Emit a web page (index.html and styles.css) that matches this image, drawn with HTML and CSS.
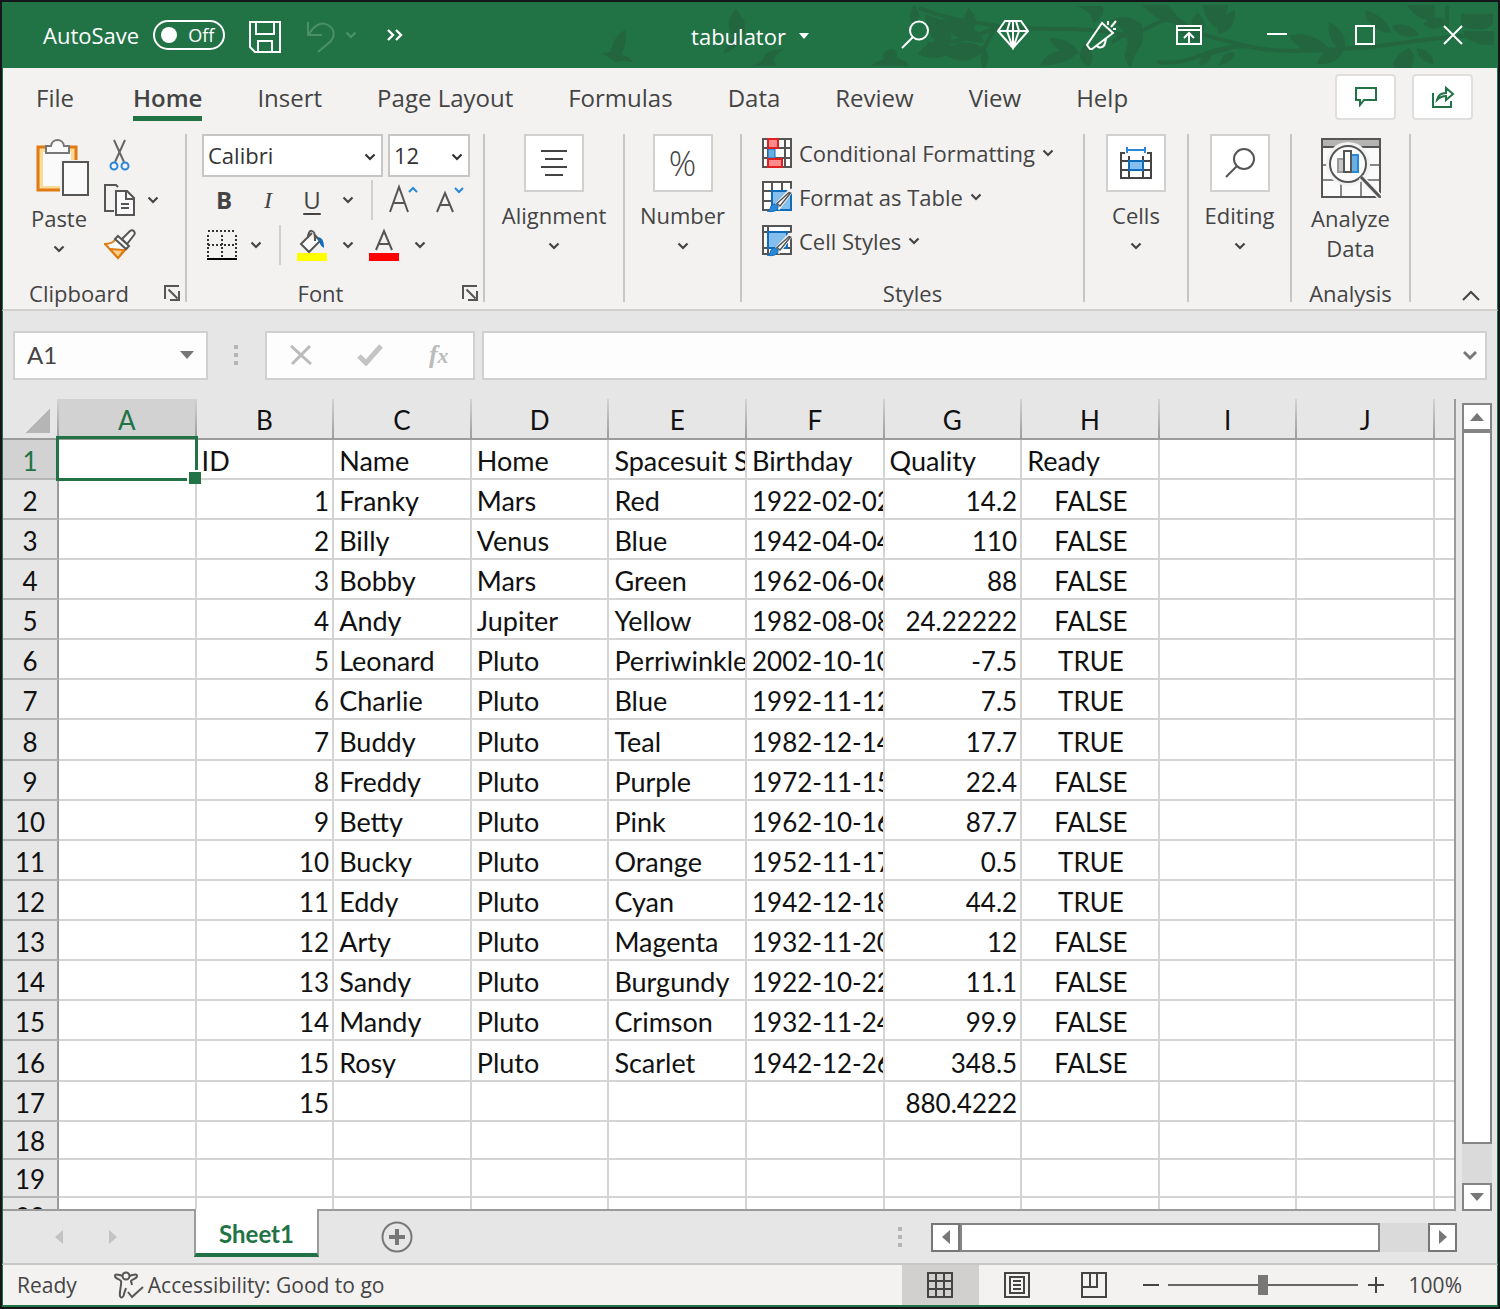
FILE: index.html
```html
<!DOCTYPE html>
<html lang="en">
<head>
<meta charset="utf-8">
<title>tabulator</title>
<link rel="stylesheet" href="styles.css">
</head>
<body>
<svg class="defs" aria-hidden="true">
  <symbol id="chev" viewBox="0 0 12 8"><path d="M1.500 1.500 6 6l4.500-4.500" fill="none" stroke="currentColor" stroke-width="2.200"/></symbol>
  <symbol id="launch" viewBox="0 0 18 18"><path d="M2 15V2h14M5.500 5.500l9 9M16 7v9H7" fill="none" stroke="#555" stroke-width="2"/></symbol>
  <symbol id="brush" viewBox="0 0 30 30"><path d="M29 9 17 25l-3-3L27 8l3-1z" fill="#fff" stroke="#f3f2f1" stroke-width="3"/><path d="M28.500 10 18 23l-3-2.500L27 9.500z" fill="#fff" stroke="#555" stroke-width="1.500"/><path d="M5 28c3 0 3-2 4-5 2-3 6-2 7 0 1 4-5 7-11 5z" fill="#2b88d8" stroke="#0f6cbd"/></symbol>
</svg>
<div class="window">
  <header class="titlebar">
    <svg class="leaves" viewBox="0 0 900 66" aria-hidden="true">
      <g fill="#22653f">
        <path d="M28 28c-10 6-13 14-14 22l-9 1c5 3 10 8 16 9 5-2 10 0 15 0-3-5-8-6-12-8 5-8 5-15 4-24z"/>
        <path d="M139 7c-9 8-8 20-4 27l-9 18c16-5 25-20 21-34zM152 64c8-1 14-4 15-9 3-6 10-7 19-8-2 4-9 6-9 10s3 5 1 7zM275 64c3-5 10-5 12-7-3-6 3-10 8-10 6 1 6 7 4 9 5 1 10 2 12 8z"/>
        <path d="M317 3c7 10 7 13 0 20-5-6-5-13 0-20zM328 13c20 2 34 18 22 34-16-6-20-20-22-34zM341 18c20-4 42 8 46 22-20 2-36-8-46-22zM371 6c10 8 10 16 4 24-10-8-9-14-4-24zM321 52c9-14 25-15 37-6-10 12-25 12-37 6zM346 51c10-12 26-14 42-4-10 14-28 15-42 4zM387 45c6 8 6 14 0 22-5-8-4-14 0-22z"/>
        <path d="M480 4h26c1 9-3 15-10 17-1-9-7-14-16-17zM443 64c6-15 22-18 37-14-6 10-18 12-37 14zM452 36c16 0 27 7 30 16-14 2-24-4-30-16zM488 42c9 9 9 16 4 22-10-3-12-14-4-22zM513 19c20-10 35 1 33 17-1 12-10 14-12 30-9-9-6-15-3-25-4-14-9-18-18-22z"/>
        <path d="M545 3h25c10 8 11 14 13 19-16 0-28-8-38-19zM605 3h26c-1 9-4 18-11 23-10-5-12-15-15-23zM638 8c1 14-5 22-17 24-2-13 7-20 17-24zM602 35c-10-12-9-18-1-24 9 9 9 17 1 24zM580 26c12 0 20 6 24 13-12 2-19-5-24-13zM602 63c2-10 6-14 12-12 1 8-5 12-12 12zM622 63c4-12 10-14 16-12-2 7-8 11-16 12z"/>
        <path d="M692 34c12-5 34 1 42 16-20 2-34-2-42-16zM732 20c15 8 18 17 15 29-12-4-17-17-15-29zM720 62c4-14 16-18 26-13-4 10-14 14-26 13zM768 8c14 4 24 12 26 23-16-1-25-10-26-23zM795 24c12-4 22 0 27 9-13 4-22 0-27-9zM812 46c8 7 4 14 2 21-8 0-15 0-18-3 2-9 8-14 16-18zM820 46c12 2 17 9 16 16-10-2-16-8-16-16zM810 3h27c2 7 0 12-3 15-12 0-20-8-24-15zM864 12h32v10c-8 8-20 6-32 2zM826 22c8-8 16-8 24-2-7 8-16 9-24 2zM866 29h31v14c-12 0-26-1-31-14z"/>
      </g>
      <g fill="none" stroke="#22653f" stroke-width="4">
        <path d="M322 6c25 10 40 12 80 18s80-2 130 10M330 42c30 0 45-8 70-16M385 50l15-28M543 30c20-10 35-24 52 0M560 10c40 25 60 26 90 34s70 4 110 2 70-12 137-14M650 44c-50 2-50 20-90 16M640 44l-36 10M850 4v26M515 40l30-18"/>
      </g>
    </svg>
    <div class="quick">
      <label class="autosave">AutoSave <span class="pill"><input type="checkbox">Off</span></label>
      <button class="tb save" aria-label="Save"><svg width="32" height="32" viewBox="0 0 32 32" fill="none" stroke="#fff" stroke-width="2"><path d="M1 1h30v30H6l-5-5zM7 1v12h18V1M9 31V20h14v11"/></svg></button>
      <button class="tb undo" aria-label="Undo"><svg width="28" height="32" viewBox="0 0 28 32" fill="none" stroke="#4c9069" stroke-width="2"><path d="M1 1v13h14M2 13C7 5 14 0 21 4s7 11 3 16L11 31"/></svg></button>
      <button class="tb more-undo" aria-label="Undo history"><svg class="chev"><use href="#chev"/></svg></button>
      <button class="tb" aria-label="More commands"><svg width="16" height="12" viewBox="0 0 16 12" fill="none" stroke="#fff" stroke-width="2.400"><path d="m1 1 5 5-5 5M9 1l5 5-5 5"/></svg></button>
    </div>
    <button class="doc">tabulator <svg width="10" height="6" viewBox="0 0 10 6"><path d="M0 0h10L5 6z" fill="#fff"/></svg></button>
    <div class="controls">
      <button class="tb search" aria-label="Search"><svg width="28" height="30" viewBox="0 0 28 30" fill="none" stroke="#fff" stroke-width="2"><circle cx="18" cy="10.500" r="9"/><path d="M12 17 1 28"/></svg></button>
      <button class="tb" aria-label="Premium"><svg width="32" height="30" viewBox="0 0 32 30" fill="none" stroke="#fff" stroke-width="2"><path d="M8 1h16l7 10-15 17L1 11zM1 11h30M13 1l-3 10 6 17 6-17-3-10M16 1v27"/></svg></button>
      <button class="tb" aria-label="Coming soon"><svg width="32" height="32" viewBox="0 0 32 32" fill="none" stroke="#fff" stroke-width="2"><path d="m17 4 11 10L7 30H5l-3-4zM12 26c1 4 7 3 8-2l1-4M23 6V2M26 8l5-6M28 10h3"/></svg></button>
      <button class="tb" aria-label="Ribbon display options"><svg width="26" height="20" viewBox="0 0 26 20" fill="none" stroke="#fff" stroke-width="2"><path d="M1 1h24v18H1zM1 5h24M13 18V9M8 13l5-5 5 5"/></svg></button>
      <button class="tb" aria-label="Minimize"><svg width="20" height="20" viewBox="0 0 20 20"><path d="M0 9h20" stroke="#fff" stroke-width="2"/></svg></button>
      <button class="tb" aria-label="Maximize"><svg width="20" height="20" viewBox="0 0 20 20"><path d="M1 1h18v18H1z" fill="none" stroke="#fff" stroke-width="2"/></svg></button>
      <button class="tb" aria-label="Close"><svg width="20" height="20" viewBox="0 0 20 20"><path d="m1 1 18 18M19 1 1 19" stroke="#fff" stroke-width="2"/></svg></button>
    </div>
  </header>

  <nav class="tabs">
    <button class="tab">File</button>
    <button class="tab active">Home</button>
    <button class="tab">Insert</button>
    <button class="tab">Page Layout</button>
    <button class="tab">Formulas</button>
    <button class="tab">Data</button>
    <button class="tab">Review</button>
    <button class="tab">View</button>
    <button class="tab">Help</button>
    <div class="share">
      <button aria-label="Comments"><svg width="22" height="20" viewBox="0 0 22 20"><path d="M1 1h20v12H9l-4 5v-5H1z" fill="none" stroke="#217346" stroke-width="2"/></svg></button>
      <button aria-label="Share"><svg width="24" height="24" viewBox="0 0 24 24" fill="none" stroke="#217346" stroke-width="2"><path d="M2 8v14h18v-6M6 15c1-5 4-7 9-7V3l7 6-7 6v-4c-4 0-6 1-9 4z"/></svg></button>
    </div>
  </nav>

  <div class="ribbon">
    <section class="group clipboard">
      <div class="body">
        <button class="big paste">
          <svg width="62" height="60" viewBox="-8 0 62 60"><path d="M2 8h38v43H2z" fill="#fad999" stroke="#e07b13" stroke-width="3"/><path d="M7 13h28v34H7z" fill="#fafafa"/><path d="M10 14V7h5c1-8 12-8 13 0h5v7z" fill="#fafafa" stroke="#777" stroke-width="2"/><path d="M24 21h29v37H24z" fill="#f3f2f1"/><path d="M27 23h25v33H27z" fill="#fafafa" stroke="#555" stroke-width="2"/></svg>
          <span>Paste</span><svg class="chev"><use href="#chev"/></svg>
        </button>
        <div class="stack">
          <button aria-label="Cut"><svg width="32" height="32" viewBox="0 0 32 32" fill="none" stroke="#666" stroke-width="2"><path d="m10 1 10 22M21 1 11 23"/><g stroke="#2b88d8"><circle cx="10" cy="27" r="3.500"/><circle cx="21" cy="27" r="3.500"/></g></svg></button>
          <div class="pair"><button aria-label="Copy"><svg width="32" height="32" viewBox="0 0 32 32" stroke="#555" stroke-width="2"><path d="M14 3 12 1H1v26h9" fill="none"/><path d="M12 7h11l7 7v17H12z" fill="#fafafa"/><path d="M22 7v8h8M17 20h8M17 24h8" fill="none"/></svg></button><button aria-label="Copy options"><svg class="chev"><use href="#chev"/></svg></button></div>
          <button aria-label="Format Painter"><svg width="32" height="32" viewBox="0 0 32 32"><path d="M12 10C9 14 5 15 1 15l13 14 9-10z" fill="#fafafa" stroke="#e07b13" stroke-width="2"/><path d="m6 20 14 1-6 8z" fill="#fad08a" stroke="#e07b13" stroke-width="2"/><path d="m14 7 11 10-3 3L11 10zM18 10l8-8c3-2 6 1 4 4l-7 9z" fill="#fafafa" stroke="#555" stroke-width="2"/></svg></button>
        </div>
      </div>
      <div class="foot">Clipboard<button aria-label="Clipboard settings"><svg width="18" height="18"><use href="#launch"/></svg></button></div>
    </section>

    <section class="group font">
      <div class="fields">
        <label class="combo face"><select aria-label="Font"><option>Calibri</option></select><svg class="chev"><use href="#chev"/></svg></label>
        <label class="combo size"><select aria-label="Font size"><option>12</option></select><svg class="chev"><use href="#chev"/></svg></label>
      </div>
      <div class="tools">
        <button class="w44"><b>B</b></button><button class="w44"><i>I</i></button><button class="w44"><u>U</u></button><button class="w28" aria-label="Underline options"><svg class="chev"><use href="#chev"/></svg></button><span class="bar"></span>
        <button class="w44" aria-label="Increase font size"><svg width="32" height="32" viewBox="0 0 32 32" fill="none" stroke="#555" stroke-width="2"><path d="m2 28 9-25 9 25M5 19h12"/><path d="m21 8 4-4 4 4" stroke="#2b88d8"/></svg></button>
        <button class="w44" aria-label="Decrease font size"><svg width="32" height="32" viewBox="0 0 32 32" fill="none" stroke="#555" stroke-width="2"><path d="m5 28 8-19 8 19M8 21h10"/><path d="m23 4 4 4 4-4" stroke="#2b88d8"/></svg></button>
      </div>
      <div class="tools">
        <button class="w40" aria-label="Borders"><svg width="30" height="30" viewBox="0 0 30 30" fill="none" stroke="#333" stroke-width="2"><path d="M1 1h28M1 15h28M1 5v22M15 5v22M29 5v22" stroke-dasharray="2 2"/><path d="M0 29h30" stroke="#000"/></svg></button><button class="w28" aria-label="Border options"><svg class="chev"><use href="#chev"/></svg></button><span class="bar"></span>
        <button class="w44" aria-label="Fill color"><svg width="32" height="32" viewBox="0 0 32 32"><path d="m16 4-11 11 8 8 11-11-6-7M12 9c0-10 7-9 7 0v3" fill="#fafafa" stroke="#555" stroke-width="2"/><path d="M22 8c5 1 6 5 6 11-5-3-4-6-6-11z" fill="#0f6cbd"/><path d="M1 24h30v8H1z" fill="#ff0"/></svg></button><button class="w28" aria-label="Fill color options"><svg class="chev"><use href="#chev"/></svg></button>
        <button class="w44" aria-label="Font color"><svg width="32" height="32" viewBox="0 0 32 32"><path d="m8 21 8-19 8 19M11 15h10" fill="none" stroke="#555" stroke-width="2"/><path d="M1 24h30v8H1z" fill="red"/></svg></button><button class="w28" aria-label="Font color options"><svg class="chev"><use href="#chev"/></svg></button>
      </div>
      <div class="foot">Font<button aria-label="Font settings"><svg width="18" height="18"><use href="#launch"/></svg></button></div>
    </section>

    <section class="group alignment"><button class="big"><span class="tile"><svg width="26" height="28" viewBox="0 0 26 28"><path d="M0 2h26M4 10h18M0 18h26M4 26h18" stroke="#444" stroke-width="2"/></svg></span><span>Alignment</span><svg class="chev"><use href="#chev"/></svg></button></section>
    <section class="group number"><button class="big"><span class="tile percent">%</span><span>Number</span><svg class="chev"><use href="#chev"/></svg></button></section>

    <section class="group styles">
      <div class="list">
        <button><svg width="30" height="30" viewBox="0 0 30 30"><path d="M1 1h28v28H1zM1 10h28M1 20h28M6 1v28M23 1v28" fill="#fff" stroke="#555" stroke-width="2"/><path d="M6 11h7v9H6z" fill="#69afe5" stroke="#0f6cbd"/><path d="M6 1h10v9H6zM6 21h14v8H6z" fill="#ff8c8c" stroke="#e02020" stroke-width="2"/></svg>Conditional Formatting<svg class="chev"><use href="#chev"/></svg></button>
        <button><svg width="30" height="32" viewBox="0 0 30 32"><path d="M1 1h28v28H1zM1 10h28M1 20h28M10 1v28M20 1v28" fill="#fff" stroke="#555" stroke-width="2"/><path d="M10 10h19v19H10z" fill="#83beec" stroke="#0f6cbd" stroke-width="2"/><use href="#brush" width="30" height="30" y="2"/></svg>Format as Table<svg class="chev"><use href="#chev"/></svg></button>
        <button><svg width="30" height="32" viewBox="0 0 30 32"><path d="M1 1h28v28H1zM1 7h28M6 1v28M1 23h28" fill="#fff" stroke="#555" stroke-width="2"/><path d="M6 7h19v16H6z" fill="#83beec" stroke="#0f6cbd" stroke-width="2"/><use href="#brush" width="30" height="30" y="2"/></svg>Cell Styles<svg class="chev"><use href="#chev"/></svg></button>
      </div>
      <div class="foot">Styles</div>
    </section>

    <section class="group cells"><button class="big"><span class="tile"><svg width="32" height="32" viewBox="0 0 32 32" fill="none" stroke="#444" stroke-width="2"><path d="M5 6H1v25h30V6h-4M1 14h30M1 23h30M9 9v22M23 9v22"/><path d="M9 14h14v9H9z" fill="#83beec" stroke="#0f6cbd"/><path d="M7 3h18M7 0v6M25 0v6" stroke="#2b88d8"/></svg></span><span>Cells</span><svg class="chev"><use href="#chev"/></svg></button></section>
    <section class="group editing"><button class="big"><span class="tile"><svg width="32" height="32" viewBox="0 0 32 32" fill="none" stroke="#555" stroke-width="2"><circle cx="20" cy="12" r="10"/><path d="M13 19 2 30"/></svg></span><span>Editing</span><svg class="chev"><use href="#chev"/></svg></button></section>
    <section class="group analysis">
      <button class="big"><svg width="62" height="62" viewBox="0 0 62 62" fill="none" stroke="#555" stroke-width="2"><path d="M2 2h58v58H2z" fill="#fafafa"/><path d="M2 2h58v8H2z" fill="#b5b3b1"/><path d="M2 28h58M2 43h58M21 43v17M41 43v17" stroke="#888"/><path d="M2 2h58v58H2z"/><circle cx="28" cy="27" r="21" fill="#f3f2f1" stroke="#f3f2f1"/><circle cx="28" cy="27" r="18" fill="#fafafa"/><path d="M18 22h6v13h-6z" fill="#c8c6c4" stroke="#999"/><path d="M31 18h7v17h-7z" fill="#69afe5" stroke="#2b88d8"/><path d="M24 14h7v21h-7z" fill="#fff"/><path d="m41 40 19 20" stroke="#f3f2f1" stroke-width="6"/><path d="m41 40 19 20" stroke-width="3"/></svg><span>Analyze<br>Data</span></button>
      <div class="foot">Analysis</div>
    </section>
    <button class="collapse" aria-label="Collapse the ribbon"><svg width="20" height="12" viewBox="0 0 20 12"><path d="m2 10 8-8 8 8" fill="none" stroke="#444" stroke-width="2"/></svg></button>
  </div>

  <div class="formula-row">
    <label class="namebox"><input type="text" value="A1" aria-label="Name box"><svg width="14" height="8" viewBox="0 0 14 8"><path d="M0 0h14L7 8z" fill="#777"/></svg></label>
    <span class="dots"></span>
    <div class="fx">
      <button aria-label="Cancel"><svg width="22" height="20" viewBox="0 0 22 20"><path d="m1 1 20 18M20 1 2 19" stroke="#bbb" stroke-width="3"/></svg></button>
      <button aria-label="Enter"><svg width="26" height="22" viewBox="0 0 26 22"><path d="m2 12 7 7L24 2" fill="none" stroke="#c4c4c4" stroke-width="5"/></svg></button>
      <button class="fn"><i>f<small>x</small></i></button>
    </div>
    <label class="formula"><input type="text" aria-label="Formula bar"><svg width="14" height="11" viewBox="0 0 14 11"><path d="m1 2 6 6 6-6" fill="none" stroke="#777" stroke-width="3"/></svg></label>
  </div>

  <main class="sheet">
    <div class="grid">
      <table>
        <colgroup><col class="c-row"><col><col><col><col><col><col><col><col><col><col><col class="c-last"></colgroup>
        <thead><tr><th class="corner"></th><th class="sel">A</th><th>B</th><th>C</th><th>D</th><th>E</th><th>F</th><th>G</th><th>H</th><th>I</th><th>J</th><th></th></tr></thead>
        <tbody>
          <tr><th class="sel">1</th><td class="cursor"></td><td>ID</td><td>Name</td><td>Home</td><td>Spacesuit S</td><td>Birthday</td><td>Quality</td><td>Ready</td><td></td><td></td><td></td></tr>
          <tr><th>2</th><td></td><td class="n">1</td><td>Franky</td><td>Mars</td><td>Red</td><td class="d">1922-02-02</td><td class="n">14.2</td><td class="b">FALSE</td><td></td><td></td><td></td></tr>
          <tr><th>3</th><td></td><td class="n">2</td><td>Billy</td><td>Venus</td><td>Blue</td><td class="d">1942-04-04</td><td class="n">110</td><td class="b">FALSE</td><td></td><td></td><td></td></tr>
          <tr><th>4</th><td></td><td class="n">3</td><td>Bobby</td><td>Mars</td><td>Green</td><td class="d">1962-06-06</td><td class="n">88</td><td class="b">FALSE</td><td></td><td></td><td></td></tr>
          <tr><th>5</th><td></td><td class="n">4</td><td>Andy</td><td>Jupiter</td><td>Yellow</td><td class="d">1982-08-08</td><td class="n">24.22222</td><td class="b">FALSE</td><td></td><td></td><td></td></tr>
          <tr><th>6</th><td></td><td class="n">5</td><td>Leonard</td><td>Pluto</td><td>Perriwinkle</td><td class="d">2002-10-10</td><td class="n">-7.5</td><td class="b">TRUE</td><td></td><td></td><td></td></tr>
          <tr><th>7</th><td></td><td class="n">6</td><td>Charlie</td><td>Pluto</td><td>Blue</td><td class="d">1992-11-12</td><td class="n">7.5</td><td class="b">TRUE</td><td></td><td></td><td></td></tr>
          <tr><th>8</th><td></td><td class="n">7</td><td>Buddy</td><td>Pluto</td><td>Teal</td><td class="d">1982-12-14</td><td class="n">17.7</td><td class="b">TRUE</td><td></td><td></td><td></td></tr>
          <tr><th>9</th><td></td><td class="n">8</td><td>Freddy</td><td>Pluto</td><td>Purple</td><td class="d">1972-11-15</td><td class="n">22.4</td><td class="b">FALSE</td><td></td><td></td><td></td></tr>
          <tr><th>10</th><td></td><td class="n">9</td><td>Betty</td><td>Pluto</td><td>Pink</td><td class="d">1962-10-16</td><td class="n">87.7</td><td class="b">FALSE</td><td></td><td></td><td></td></tr>
          <tr><th>11</th><td></td><td class="n">10</td><td>Bucky</td><td>Pluto</td><td>Orange</td><td class="d">1952-11-17</td><td class="n">0.5</td><td class="b">TRUE</td><td></td><td></td><td></td></tr>
          <tr><th>12</th><td></td><td class="n">11</td><td>Eddy</td><td>Pluto</td><td>Cyan</td><td class="d">1942-12-18</td><td class="n">44.2</td><td class="b">TRUE</td><td></td><td></td><td></td></tr>
          <tr><th>13</th><td></td><td class="n">12</td><td>Arty</td><td>Pluto</td><td>Magenta</td><td class="d">1932-11-20</td><td class="n">12</td><td class="b">FALSE</td><td></td><td></td><td></td></tr>
          <tr><th>14</th><td></td><td class="n">13</td><td>Sandy</td><td>Pluto</td><td>Burgundy</td><td class="d">1922-10-22</td><td class="n">11.1</td><td class="b">FALSE</td><td></td><td></td><td></td></tr>
          <tr><th>15</th><td></td><td class="n">14</td><td>Mandy</td><td>Pluto</td><td>Crimson</td><td class="d">1932-11-24</td><td class="n">99.9</td><td class="b">FALSE</td><td></td><td></td><td></td></tr>
          <tr><th>16</th><td></td><td class="n">15</td><td>Rosy</td><td>Pluto</td><td>Scarlet</td><td class="d">1942-12-26</td><td class="n">348.5</td><td class="b">FALSE</td><td></td><td></td><td></td></tr>
          <tr><th>17</th><td></td><td class="n">15</td><td></td><td></td><td></td><td></td><td class="n">880.4222</td><td></td><td></td><td></td><td></td></tr>
          <tr class="short"><th>18</th><td></td><td></td><td></td><td></td><td></td><td></td><td></td><td></td><td></td><td></td><td></td></tr>
          <tr class="short"><th>19</th><td></td><td></td><td></td><td></td><td></td><td></td><td></td><td></td><td></td><td></td><td></td></tr>
          <tr class="short"><th>20</th><td></td><td></td><td></td><td></td><td></td><td></td><td></td><td></td><td></td><td></td><td></td></tr>
        </tbody>
      </table>
    </div>
    <div class="vscroll">
      <button aria-label="Scroll up"><svg width="14" height="8" viewBox="0 0 14 8"><path d="M0 8h14L7 0z" fill="#777"/></svg></button>
      <div class="vthumb"></div><div class="vtrack"></div>
      <button aria-label="Scroll down"><svg width="14" height="8" viewBox="0 0 14 8"><path d="M0 0h14L7 8z" fill="#777"/></svg></button>
    </div>
  </main>

  <div class="sheetbar">
    <button class="nav" aria-label="Previous sheet"><svg width="8" height="14" viewBox="0 0 8 14"><path d="M8 0v14L0 7z" fill="#c3c3c3"/></svg></button>
    <button class="nav" aria-label="Next sheet"><svg width="8" height="14" viewBox="0 0 8 14"><path d="M0 0v14l8-7z" fill="#c3c3c3"/></svg></button>
    <button class="sheet-tab">Sheet1</button>
    <button class="add" aria-label="New sheet"><svg width="32" height="32" viewBox="0 0 32 32" fill="none" stroke="#777"><circle cx="16" cy="16" r="14.500" stroke-width="2"/><path d="M16 8v16M8 16h16" stroke-width="4"/></svg></button>
    <span class="dots"></span>
    <div class="hscroll">
      <button aria-label="Scroll left"><svg width="8" height="14" viewBox="0 0 8 14"><path d="M8 0v14L0 7z" fill="#777"/></svg></button>
      <div class="hthumb"></div><div class="htrack"></div>
      <button aria-label="Scroll right"><svg width="8" height="14" viewBox="0 0 8 14"><path d="M0 0v14l8-7z" fill="#777"/></svg></button>
    </div>
  </div>

  <footer class="status">
    <span>Ready</span>
    <button class="access"><svg width="30" height="28" viewBox="0 0 30 28" fill="none" stroke="#555" stroke-width="2"><circle cx="12" cy="5" r="3.500"/><path d="M9 5C5 4 1 2 1 5s5 3 6 5-2 12-1 15 4 1 4-2l2-6M15 5c4-1 8-3 8 0s-5 3-6 5l1 4M14 21l4 5L29 16"/></svg>Accessibility: Good to go</button>
    <div class="views">
      <button class="view on" aria-label="Normal view"><svg width="26" height="26" viewBox="0 0 26 26" fill="none" stroke="#444" stroke-width="2"><path d="M1 1h24v24H1zM1 9h24M1 17h24M9 1v24M17 1v24"/></svg></button>
      <button class="view" aria-label="Page layout view"><svg width="26" height="26" viewBox="0 0 26 26" fill="none" stroke="#444" stroke-width="2"><path d="M1 1h24v24H1zM6 5h14v16H6zM9 9h8M9 13h8M9 17h8"/></svg></button>
      <button class="view" aria-label="Page break view"><svg width="26" height="26" viewBox="0 0 26 26" fill="none" stroke="#444" stroke-width="2"><path d="M1 1h24v24H1zM1 15h15V1M9 1v14"/></svg></button>
    </div>
    <button class="step" aria-label="Zoom out"><svg width="16" height="16" viewBox="0 0 16 16"><path d="M0 8h16" stroke="#444" stroke-width="2"/></svg></button>
    <input class="zoom" type="range" min="0" max="100" value="50" aria-label="Zoom">
    <button class="step" aria-label="Zoom in"><svg width="16" height="16" viewBox="0 0 16 16"><path d="M0 8h16M8 0v16" stroke="#444" stroke-width="2"/></svg></button>
    <button class="pct">100%</button>
  </footer>
</div>
</body>
</html>
```
FILE: styles.css
```css
* { box-sizing: border-box; }
body {
  margin: 0;
  background: #15151c;
  color: #444;
  font: 22px/30px "Open Sans", "Noto Sans", sans-serif;
}
button, input, select { font: inherit; color: inherit; margin: 0; padding: 0; border: 0; background: none; border-radius: 0; outline: 0; }
button { display: flex; align-items: center; justify-content: center; white-space: nowrap; }
svg { display: block; flex: none; }
.defs { position: absolute; width: 0; height: 0; }
.chev { width: 12px; height: 8px; }

.window {
  display: flex;
  flex-direction: column;
  height: 100vh;
  border: 2px solid #15151c;
  background: #e6e6e6;
  overflow: hidden;
}
.window > * { border: 0 solid #217346; border-left-width: 1px; border-right-width: 1px; flex: none; }

/* Title bar */
.titlebar {
  position: relative;
  display: grid;
  grid-template-columns: 1fr auto 1fr;
  align-items: center;
  height: 66px;
  background: #217346;
  color: #fff;
  font-weight: 500;
}
.leaves { position: absolute; right: 0; top: 0; width: 900px; height: 66px; }
.quick, .doc, .controls { position: relative; }
.quick { display: flex; align-items: center; padding-left: 40px; }
.autosave { display: flex; align-items: center; gap: 14px; }
.pill { display: flex; align-items: center; gap: 11px; width: 72px; height: 30px; padding-left: 6px; border: 2px solid #fff; border-radius: 15px; font-size: 18px; }
.pill input { appearance: none; width: 16px; height: 16px; border-radius: 50%; background: #fff; }
.save { margin: 4px 0 0 24px; }
.undo { margin: 4px 0 0 26px; }
.more-undo { margin: 0 30px 0 10px; color: #4c9069; }
.doc { gap: 13px; padding-top: 2px; }
.controls { display: flex; justify-content: flex-end; }
.controls .tb { width: 88px; height: 66px; }
.controls .search { width: 108px; }

/* Ribbon tabs */
.tabs { display: flex; align-items: flex-start; gap: 55px; height: 66px; padding: 0 24px 0 33px; background: #f3f2f1; }
.tab { padding: 14px 0 2px; border-bottom: 5px solid transparent; font-size: 24px; line-height: 32px; }
.tab.active { margin-left: 4px; border-color: #217346; font-weight: 600; }
.share { display: flex; gap: 16px; margin: 6px 0 0 auto; }
.share button { width: 61px; height: 46px; border: 2px solid #e1dfdd; border-radius: 4px; background: #fff; }

/* Ribbon */
.ribbon { display: flex; align-items: flex-start; height: 177px; background: #f3f2f1; border-bottom: 2px solid #d2d0ce !important; }
.group { display: flex; flex-direction: column; height: 168px; border-right: 2px solid #c8c6c4; }
.foot { position: relative; display: flex; justify-content: center; margin: auto 0 1px; line-height: 16px; }
.foot button { position: absolute; right: 4px; bottom: -1px; }
.clipboard { width: 184px; }
.clipboard .foot { padding-right: 30px; }
.body { display: flex; gap: 14px; padding: 5px 0 0 25px; }
.big { flex-direction: column; }
.big .chev { margin-top: 12px; }
.paste { justify-content: flex-start; }
.paste span { margin-top: 4px; }
.stack { display: flex; flex-direction: column; align-items: flex-start; gap: 13px; }
.pair { display: flex; gap: 11px; }
.font { width: 298px; padding-left: 15px; }
.fields { display: flex; gap: 5px; }
.combo { position: relative; height: 43px; border: 2px solid #c8c6c4; background: #fff; color: #333; }
.combo select { appearance: none; width: 100%; height: 100%; padding: 0 0 2px 4px; }
.combo .chev { position: absolute; right: 5px; top: 17px; pointer-events: none; }
.face { width: 181px; }
.size { width: 82px; }
.tools { display: flex; align-items: center; height: 45px; }
.tools b, .tools i, .tools u { font-size: 24px; }
.tools i { font-family: "Liberation Serif", serif; }
.tools u { text-underline-offset: 4px; }
.w44 { width: 44px; }
.w40 { width: 40px; }
.w28 { width: 28px; }
.bar { width: 2px; height: 40px; margin: 0 9px; background: #d2d0ce; }
.font .foot { padding-right: 44px; }
.alignment { width: 140px; }
.number { width: 117px; }
.tile { display: flex; align-items: center; justify-content: center; width: 60px; height: 58px; margin-bottom: 8px; border: 2px solid #d2d0ce; background: #fff; }
.percent { font-size: 34px; font-weight: 300; }
.styles { width: 343px; }
.list { display: flex; flex-direction: column; padding: 3px 0 0 20px; gap: 12px; }
.list button { align-self: flex-start; gap: 7px; height: 32px; }
.cells { width: 104px; }
.editing { width: 103px; }
.analysis { width: 119px; }
.analysis .big { padding-top: 3px; gap: 4px; }
.collapse { width: 36px; height: 24px; margin: 150px 8px 0 auto; }

/* Formula bar */
.formula-row { display: flex; align-items: center; height: 88px; padding: 0 10px; }
.namebox, .fx, .formula { display: flex; align-items: center; height: 49px; border: 2px solid #d0d0d0; background: #fdfdfd; }
.namebox { width: 195px; padding: 0 12px; font: 24px/30px Lato, sans-serif; }
.namebox input { flex: 1; min-width: 0; }
.dots { width: 4px; height: 20px; background: repeating-linear-gradient(#b5b5b5 0 4px, transparent 4px 8px); }
.formula-row .dots { margin: 0 27px 0 26px; }
.fx { width: 210px; }
.fx button { flex: 1; }
.fx .fn { font: bold 26px/30px "Liberation Serif", serif; color: #bbb; }
.formula { flex: 1; margin-left: 7px; padding: 0 8px 0 12px; }
.formula input { flex: 1; }

/* Sheet */
.window > .sheet { display: flex; gap: 6px; flex: 1; min-height: 0; padding-right: 5px; }
.grid { flex: 1; min-width: 0; overflow: hidden; border: solid #9b9b9b; border-width: 0 2px 2px 0; }
table { width: 100%; table-layout: fixed; border-collapse: separate; border-spacing: 0; color: #111; font: 26px/30px Lato, sans-serif; }
.c-row { width: 56px; }
.c-last { width: 19px; }
th, td { height: 40px; padding: 4px 3px 0 5px; overflow: hidden; white-space: nowrap; text-align: left; }
td { border: solid #d4d4d4; border-width: 0 2px 2px 0; background: #fff; font-size: 27px; }
td:last-child, thead th:last-child { border-right: 0; }
tbody tr:nth-child(8n) > * { height: 41px; }
th { padding: 4px 0 0; text-align: center; font-weight: 400; }
thead th { height: 41px; padding-top: 2px; border-bottom: 2px solid #9b9b9b; border-right: 2px solid; border-image: linear-gradient(#d4d4d4, #9b9b9b) 1; }
tbody th { border: solid #b5b5b5; border-width: 0 2px 2px 0; border-right-color: #9b9b9b; }
.short th, .short td { height: 38px; padding-top: 2px; }
th.sel { background: #d2d2d2; color: #217346; }
.corner { background: linear-gradient(135deg, transparent 50%, #b5b5b5 50%) 23px 10px / 24px 24px no-repeat; }
.n, .b, .d { font-size: 26px; }
.n { text-align: right; }
.b { text-align: center; }
.cursor { position: relative; overflow: visible; }
.cursor::before { content: ""; position: absolute; z-index: 1; inset: -4px -3px -3px -3px; border: 3px solid #217346; }
.cursor::after { content: ""; position: absolute; z-index: 2; right: -6px; bottom: -6px; width: 12px; height: 12px; border: solid #fff; border-width: 2px 0 0 2px; background: #217346; }

.vscroll { display: flex; flex-direction: column; width: 30px; padding-top: 4px; }
.vscroll button { height: 28px; border: 2px solid #858585; background: #fff; }
.vthumb { flex: 18; border: 2px solid #858585; background: #fff; }
.vtrack { flex: 1; background: #dadada; }

/* Sheet tabs */
.sheetbar { display: flex; height: 54px; padding-right: 40px; border-bottom: 2px solid #c8c6c4 !important; }
.nav { width: 54px; }
.nav:first-child { margin-left: 29px; }
.sheet-tab { width: 125px; height: 46px; margin: -2px 0 0 54px; padding-top: 6px; border: solid #9b9b9b; border-width: 0 2px; border-bottom: 4px solid #217346; background: #fff; color: #217346; font: bold 24px/30px Lato, sans-serif; }
.window .sheet-tab { height: 48px; }
.add { margin-left: 62px; }
.sheetbar .dots { align-self: center; margin: 0 29px 0 auto; }
.hscroll { display: flex; align-self: center; width: 526px; height: 29px; }
.hscroll button { width: 29px; border: 2px solid #777; background: #fff; }
.hthumb { flex: 43; border: 2px solid #858585; background: #fff; }
.htrack { flex: 5; background: #dadada; }

/* Status bar */
.window > .status { display: flex; align-items: center; height: 42px; padding: 0 35px 0 14px; border-bottom-width: 2px; background: #f3f2f1; font-size: 21px; }
.access { gap: 4px; margin-left: 37px; }
.views { display: flex; align-self: stretch; margin-left: auto; }
.view { width: 77px; }
.on { background: #d2d0ce; }
.step { margin: 0 9px 0 10px; }
.zoom { appearance: none; width: 190px; height: 20px; background: linear-gradient(#666, #666) center / 100% 2px no-repeat; }
.zoom::-webkit-slider-thumb { appearance: none; width: 10px; height: 20px; background: #777; }
.pct { margin-left: 16px; }
```
